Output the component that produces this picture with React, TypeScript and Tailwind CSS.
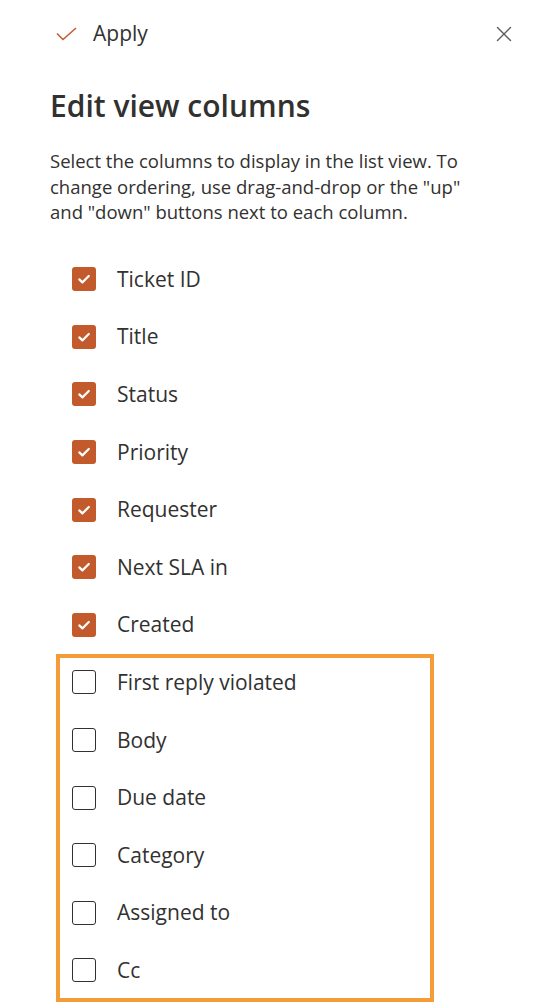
import { X } from 'lucide-react'

const checked = ['Ticket ID', 'Title', 'Status', 'Priority', 'Requester', 'Next SLA in', 'Created']
const unchecked = ['First reply violated', 'Body', 'Due date', 'Category', 'Assigned to', 'Cc']

function Row({ label, on }: { label: string; on: boolean }) {
  return (
    <div className="flex items-center h-[57.6px] pl-[72px]">
      {on ? (
        <span className="w-6 h-6 rounded-[3px] bg-[#c25a2c] flex items-center justify-center">
          <svg width="14" height="14" viewBox="0 0 14 14" fill="none">
            <path d="M2.3 7.4l3.1 3L11.8 4" stroke="#fff" strokeWidth="2.2" strokeLinecap="round" strokeLinejoin="round" />
          </svg>
        </span>
      ) : (
        <span className="w-6 h-6 rounded-[3px] border border-[#323130] bg-white" />
      )}
      <span className="ml-[21px] text-[21px] text-[#323130] leading-none">{label}</span>
    </div>
  )
}

export default function App() {
  return (
    <div className="w-[542px] h-[1004px] bg-white overflow-hidden" style={{ fontFamily: '"Open Sans", "Noto Sans", sans-serif' }}>
      <div className="flex items-center justify-between h-[68px] pl-[56px] pr-[25px]">
        <button className="flex items-center gap-[16px] text-[21px] text-[#323130]">
          <svg width="21" height="14" viewBox="0 0 21 14" fill="none">
            <path d="M1 6.5l6 6L20 1" stroke="#c25a2c" strokeWidth="1.5" />
          </svg>
          Apply
        </button>
        <X size={26} strokeWidth={1.3} className="text-[#605e5c]" />
      </div>
      <h1 className="px-[50px] mt-[19px] text-[30px] font-semibold text-[#323130] leading-[38px]">Edit view columns</h1>
      <p className="pl-[50px] pr-[52px] mt-[23px] text-[18.5px] leading-[25.5px] text-[#323130]">
        Select the columns to display in the list view. To change ordering, use drag-and-drop or the "up" and "down" buttons next to each column.
      </p>
      <div className="mt-[26px]">
        {checked.map(l => (
          <Row key={l} label={l} on />
        ))}
        <div className="relative">
          <div className="absolute left-[56px] w-[378px] top-0 bottom-[-3px] border-4 border-[#f39c38] pointer-events-none" />
          {unchecked.map(l => (
            <Row key={l} label={l} on={false} />
          ))}
        </div>
      </div>
    </div>
  )
}
